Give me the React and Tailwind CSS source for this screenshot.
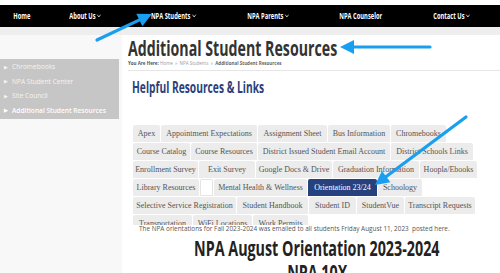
import { ChevronDown } from "lucide-react"

const navItems = [
  { label: "Home", w: "w-[44px]" },
  { label: "About Us", w: "w-[88px]", drop: true },
  { label: "NPA Students", w: "w-[92px]", drop: true },
  { label: "NPA Parents", w: "w-[102px]", drop: true },
  { label: "NPA Counselor", w: "w-[88px]" },
  { label: "Contact Us", w: "w-[96px] shrink-0", drop: true },
]

const sideItems = ["Chromebooks", "NPA Student Center", "Site Council", "Additional Student Resources"]

const tabRows = [
  [
    ["Apex", "w-[27px]"],
    ["Appointment Expectations", "w-[96px]"],
    ["Assignment Sheet", "w-[69px]"],
    ["Bus Information", "w-[62px]"],
    ["Chromebooks", "w-[55px]"],
  ],
  [
    ["Course Catalog", "w-[57px]"],
    ["Course Resources", "w-[66px]"],
    ["District Issued Student Email Account", "w-[132px]"],
    ["District Schools Links", "w-[82px]"],
  ],
  [
    ["Enrollment Survey", "w-[65px]"],
    ["Exit Survey", "w-[56px]"],
    ["Google Docs & Drive", "w-[76px]"],
    ["Graduation Information", "w-[86px]"],
    ["Hoopla/Ebooks", "w-[57px]"],
  ],
  [
    ["Library Resources", "w-[66px]"],
    ["", "w-[13px]"],
    ["Mental Health & Wellness", "w-[93px]"],
    ["Orientation 23/24", "w-[69px]"],
    ["Schoology", "w-[44px]"],
  ],
  [
    ["Selective Service Registration", "w-[103px]"],
    ["Student Handbook", "w-[71px]"],
    ["Student ID", "w-[47px]"],
    ["StudentVue", "w-[47px]"],
    ["Transcript Requests", "w-[70px]"],
  ],
  [
    ["Transportation", "w-[59px]"],
    ["WiFi Locations", "w-[59px]"],
    ["Work Permits", "w-[55px]"],
  ],
]

function Arrow({ x1, y1, x2, y2 }) {
  const dx = x2 - x1
  const dy = y2 - y1
  const len = Math.hypot(dx, dy)
  const ux = dx / len
  const uy = dy / len
  const hl = 14
  const hw = 7
  const bx = x2 - ux * hl
  const by = y2 - uy * hl
  const pts = `${x2},${y2} ${bx - uy * hw},${by + ux * hw} ${bx + uy * hw},${by - ux * hw}`
  return (
    <g>
      <line x1={x1} y1={y1} x2={bx + ux * 2} y2={by + uy * 2} stroke="#1a9ff0" strokeWidth="3.2" strokeLinecap="round" />
      <polygon points={pts} fill="#1a9ff0" />
    </g>
  )
}

export default function App() {
  return (
    <div className="relative w-[500px] h-[273px] overflow-hidden bg-white font-['Open_Sans',sans-serif]">
      <div className="h-[5px] bg-white" />
      <nav className="flex h-[22px] bg-black overflow-hidden">
        {navItems.map((item) => (
          <div key={item.label} className={`${item.w} flex items-center justify-center`}>
            <span className="inline-flex items-center scale-x-[0.72] text-[8px] font-bold text-white whitespace-nowrap">
              {item.label}
              {item.drop && <ChevronDown size={8} strokeWidth={2.5} className="ml-[1px]" />}
            </span>
          </div>
        ))}
      </nav>
      <div className="h-[8px] bg-[#eeeeee]" />

      <div className="flex h-[238px]">
        <aside className="w-[122px] shrink-0 bg-[#f8f8f8] pt-[24px]">
          <ul className="w-[119px] bg-[#c6c6c6] py-[1px]">
            {sideItems.map((s, i) => (
              <li
                key={s}
                className={`flex items-center h-[14.5px] pl-[4px] text-[6.6px] whitespace-nowrap ${
                  i === 3 ? "font-semibold text-white" : "text-[#f4f4f4]"
                }`}
              >
                <span className="text-[5px] mr-[4px]">▶</span>
                {s}
              </li>
            ))}
          </ul>
        </aside>

        <main className="flex-1 pl-[6px]">
          <h1 className="h-[24px] leading-[24px] text-[22px] font-bold text-[#333333] whitespace-nowrap">
            <span className="inline-block origin-left scale-x-[0.645]">Additional Student Resources</span>
          </h1>
          <div className="h-[12px] pt-[2px] border-b border-[#e6e6e6] text-[4.5px] leading-[5px] text-[#9a9a9a] whitespace-nowrap">
            <span className="font-bold text-[#555555]">You Are Here: </span> Home &nbsp;»&nbsp; NPA Students &nbsp;»&nbsp;{" "}
            <span className="font-bold text-[#666666]">Additional Student Resources</span>
          </div>
          <h2 className="mt-[6px] pl-[4px] h-[20px] leading-[20px] text-[16px] font-bold text-[#2b3f7c] whitespace-nowrap">
            <span className="inline-block origin-left scale-x-[0.64]">Helpful Resources &amp; Links</span>
          </h2>

          <div className="mt-[28px] ml-[5px] h-[100px] overflow-hidden flex flex-col gap-[1px] font-['Liberation_Serif',serif] text-[8px]">
            {tabRows.map((row, ri) => (
              <div key={ri} className="flex gap-[1px]">
                {row.map(([label, w], ti) => {
                  const active = label === "Orientation 23/24"
                  const blank = label === ""
                  return (
                    <div
                      key={ti}
                      className={`${w} h-[17px] shrink-0 flex items-center justify-center whitespace-nowrap rounded-t-[2px] ${
                        active
                          ? "bg-[#26427e] text-white"
                          : blank
                          ? "bg-white border border-[#e4e4e4]"
                          : "bg-[#ececec] text-[#555555]"
                      }`}
                    >
                      {label}
                    </div>
                  )
                })}
              </div>
            ))}
          </div>

          <p className="pl-[11px] text-[6.4px] leading-[8px] text-[#555555] whitespace-nowrap">
            The NPA orientations for Fall 2023-2024 was emailed to all students Friday August 11, 2023&nbsp; posted here.
          </p>
          <h3 className="mt-[2px] h-[24px] leading-[24px] text-center text-[22px] font-bold text-[#222222] whitespace-nowrap">
            <span className="inline-block scale-x-[0.65]">NPA August Orientation 2023-2024</span>
          </h3>
          <h3 className="h-[24px] leading-[24px] text-center text-[22px] font-bold text-[#222222] whitespace-nowrap">
            <span className="inline-block scale-x-[0.65]">NPA 10X</span>
          </h3>
        </main>
      </div>

      <svg className="absolute inset-0 pointer-events-none" width="500" height="273" viewBox="0 0 500 273">
        <Arrow x1={97} y1={40} x2={152} y2={14} />
        <Arrow x1={430} y1={47} x2={340} y2={47} />
        <Arrow x1={466} y1={117} x2={375} y2={185} />
      </svg>
    </div>
  )
}
